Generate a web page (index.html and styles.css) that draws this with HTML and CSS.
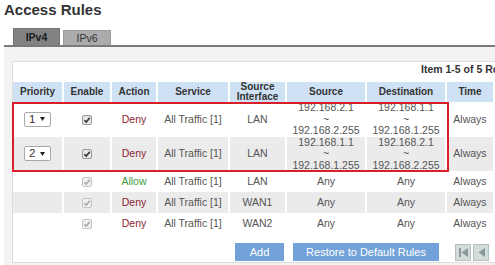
FILE: index.html
```html
<!DOCTYPE html>
<html lang="en">
<head>
  <meta charset="UTF-8">
  <title>Access Rules</title>
  <link rel="stylesheet" href="styles.css">
</head>
<body>

<div class="page">
  <h1 class="title">Access Rules</h1>

  <div class="tabs">
    <span class="tab active">IPv4</span>
    <span class="tab">IPv6</span>
  </div>

  <div class="panel">
    <div class="box">
      <div class="info">Item 1-5 of 5 Rows per page</div>

      <div class="grid">
        <table class="rules">
          <thead>
            <tr>
              <th class="c-pri">Priority</th>
              <th class="c-en">Enable</th>
              <th class="c-act">Action</th>
              <th class="c-svc">Service</th>
              <th class="c-if">Source<br>Interface</th>
              <th class="c-src">Source</th>
              <th class="c-dst">Destination</th>
              <th class="c-time">Time</th>
            </tr>
          </thead>
          <tbody>
            <tr class="tall">
              <td><span class="pick">1 <svg width="5" height="4" viewBox="0 0 5 4"><path d="M0 0H5L2.5 4Z"/></svg></span></td>
              <td><svg class="check" width="10" height="10" viewBox="0 0 10 10"><rect x="0.5" y="0.5" width="9" height="9" rx="1.5"/><path d="M2.4 5.2L4.2 7.1L7.8 2.7"/></svg></td>
              <td class="deny">Deny</td>
              <td>All Traffic [1]</td>
              <td>LAN</td>
              <td>192.168.2.1<br>~<br>192.168.2.255</td>
              <td>192.168.1.1<br>~<br>192.168.1.255</td>
              <td>Always</td>
            </tr>
            <tr class="tall alt">
              <td><span class="pick">2 <svg width="5" height="4" viewBox="0 0 5 4"><path d="M0 0H5L2.5 4Z"/></svg></span></td>
              <td><svg class="check" width="10" height="10" viewBox="0 0 10 10"><rect x="0.5" y="0.5" width="9" height="9" rx="1.5"/><path d="M2.4 5.2L4.2 7.1L7.8 2.7"/></svg></td>
              <td class="deny">Deny</td>
              <td>All Traffic [1]</td>
              <td>LAN</td>
              <td>192.168.1.1<br>~<br>192.168.1.255</td>
              <td>192.168.2.1<br>~<br>192.168.2.255</td>
              <td>Always</td>
            </tr>
            <tr>
              <td></td>
              <td><svg class="check off" width="10" height="10" viewBox="0 0 10 10"><rect x="0.5" y="0.5" width="9" height="9" rx="1.5"/><path d="M2.4 5.2L4.2 7.1L7.8 2.7"/></svg></td>
              <td class="allow">Allow</td>
              <td>All Traffic [1]</td>
              <td>LAN</td>
              <td>Any</td>
              <td>Any</td>
              <td>Always</td>
            </tr>
            <tr class="alt">
              <td></td>
              <td><svg class="check off" width="10" height="10" viewBox="0 0 10 10"><rect x="0.5" y="0.5" width="9" height="9" rx="1.5"/><path d="M2.4 5.2L4.2 7.1L7.8 2.7"/></svg></td>
              <td class="deny">Deny</td>
              <td>All Traffic [1]</td>
              <td>WAN1</td>
              <td>Any</td>
              <td>Any</td>
              <td>Always</td>
            </tr>
            <tr>
              <td></td>
              <td><svg class="check off" width="10" height="10" viewBox="0 0 10 10"><rect x="0.5" y="0.5" width="9" height="9" rx="1.5"/><path d="M2.4 5.2L4.2 7.1L7.8 2.7"/></svg></td>
              <td class="deny">Deny</td>
              <td>All Traffic [1]</td>
              <td>WAN2</td>
              <td>Any</td>
              <td>Any</td>
              <td>Always</td>
            </tr>
          </tbody>
        </table>
        <!-- highlight around the two custom rules -->
        <div class="highlight"></div>
      </div>

      <div class="actions">
        <span class="btn add">Add</span>
        <span class="btn restore">Restore to Default Rules</span>
        <div class="pager">
          <span class="nav"><svg width="9" height="9" viewBox="0 0 9 9"><rect x="0" y="0" width="2" height="9"/><path d="M9 0V9L2.5 4.5Z"/></svg></span>
          <span class="nav"><svg width="9" height="9" viewBox="0 0 9 9"><path d="M8 0V9L1.5 4.5Z"/></svg></span>
        </div>
      </div>
    </div>
  </div>
</div>

</body>
</html>
```

FILE: styles.css
```css
body {
  margin: 0;
  background-color: #fff;
  font-family: "Liberation Sans", Arial, sans-serif;
  color: #555;
  overflow: hidden;
}
.page {
  width: 497px;
}
.title {
  margin: 0;
  padding-left: 4px;
  font-size: 15px;
  line-height: 20px;
  font-weight: bold;
  color: #333;
}

/* tabs */
.tabs {
  display: flex;
  align-items: flex-end;
  gap: 3px;
  height: 17px;
  margin: 8px 0 0 4px;
  padding-left: 9px;
  border-bottom: 2px solid #7a7a7a;
}
.tab {
  width: 48px;
  height: 15px;
  box-sizing: border-box;
  line-height: 14px;
  text-align: center;
  font-size: 10.5px;
  color: #333;
  background-color: #ababab;
  border: 1px solid #9c9c9c;
  border-bottom: 0;
}
.tab.active {
  width: 47px;
  height: 17px;
  line-height: 16px;
  font-weight: bold;
  color: #1a1a1a;
  background-color: #828282;
  border-color: #747474;
}

/* panel + box */
.panel {
  margin-left: 4px;
  padding: 14px 0 3px 8px;
  background-color: #f3f3f3;
}
.box {
  background-color: #fff;
  border: 1px solid #dcdcdc;
  border-right: 0;
}
.info {
  height: 15px;
  line-height: 15px;
  margin-bottom: 5px;
  padding-left: 408px;
  font-size: 10.5px;
  font-weight: bold;
  color: #333;
  white-space: nowrap;
  overflow: hidden;
}

/* table */
.grid {
  position: relative;
}
.rules {
  width: 482px;
  table-layout: fixed;
  border-collapse: separate;
  border-spacing: 0;
  font-size: 10.5px;
}
.rules th,
.rules td {
  box-sizing: border-box;
  padding: 0;
  border-right: 2px solid #fff;
  text-align: center;
  vertical-align: middle;
}
.rules th {
  height: 20px;
  background-color: #cfe1f4;
  color: #333;
  font-size: 10px;
  line-height: 10px;
  font-weight: bold;
}
.rules td {
  height: 21px;
  line-height: 11.5px;
}
.rules .tall td {
  height: 34.5px;
}
.rules .alt td {
  background-color: #ebebeb;
}
.c-pri { width: 51px; }
.c-en { width: 48px; }
.c-act { width: 46px; }
.c-svc { width: 72px; }
.c-if { width: 57px; }
.c-src { width: 80px; }
.c-dst { width: 80px; }
.c-time { width: 48px; }

.deny { color: #8b1e34; }
.allow { color: #3f9b3f; }

.pick {
  display: inline-flex;
  align-items: center;
  justify-content: space-between;
  width: 27px;
  height: 15px;
  box-sizing: border-box;
  padding: 0 5px 0 4px;
  border: 1px solid #a9a9a9;
  border-radius: 2px;
  background-color: #fff;
  color: #333;
  font-size: 11.5px;
  line-height: 13px;
  vertical-align: middle;
}
.pick svg {
  fill: #222;
}
.check {
  display: inline-block;
  vertical-align: middle;
}
.check rect {
  fill: #e6e6e6;
  stroke: #9a9a9a;
}
.check path {
  fill: none;
  stroke: #333;
  stroke-width: 1.6;
}
.check.off rect {
  fill: #f0f0f0;
  stroke: #c4c4c4;
}
.check.off path {
  stroke: #a8a8a8;
}

.highlight {
  position: absolute;
  left: -1px;
  top: 20px;
  width: 437px;
  height: 70px;
  box-sizing: border-box;
  border: 2px solid #d81f2a;
}

/* buttons */
.actions {
  display: flex;
  justify-content: flex-end;
  align-items: center;
  gap: 9px;
  padding: 9px 8px 1px 0;
}
.btn {
  height: 18px;
  line-height: 18px;
  text-align: center;
  font-size: 11px;
  color: #fff;
  background-color: #72a2d9;
}
.btn.add { width: 49px; }
.btn.restore { width: 146px; }
.pager {
  display: flex;
  gap: 2px;
  margin-left: 7px;
}
.nav {
  display: flex;
  align-items: center;
  justify-content: center;
  width: 16px;
  height: 17px;
  box-sizing: border-box;
  background-color: #d4dbdb;
  border: 1px solid #b5bfbf;
}
.nav svg {
  fill: #889a9a;
}
```
